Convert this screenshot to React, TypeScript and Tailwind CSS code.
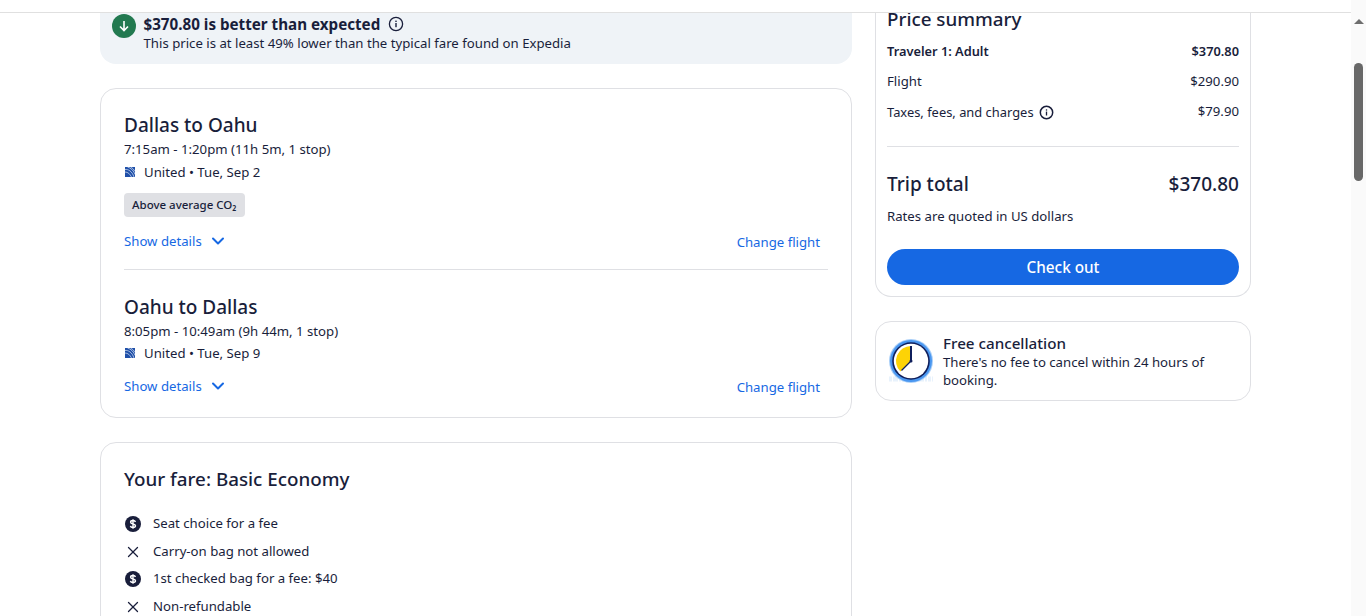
import React from 'react';
import { ChevronDown, X } from 'lucide-react';

const Info = ({ size = 16, weight = 1.3 }: { size?: number; weight?: number }) => (
  <svg width={size} height={size} viewBox="0 0 16 16" fill="none" className="shrink-0">
    <circle cx="8" cy="8" r="6.600" stroke="#191e3b" strokeWidth={weight} />
    <rect x="7.300" y="7" width="1.400" height="4.200" fill="#191e3b" />
    <rect x="7.300" y="4.600" width="1.400" height="1.400" fill="#191e3b" />
  </svg>
);

const Dollar = () => (
  <svg width="16" height="16" viewBox="0 0 16 16" className="shrink-0">
    <circle cx="8" cy="8" r="8" fill="#191e3b" />
    <path d="M10.400 6c-.2-1-1.100-1.500-2.400-1.500-1.300 0-2.400.6-2.400 1.700 0 2.300 4.900 1.200 4.900 3.600 0 1.100-1.100 1.700-2.500 1.700-1.400 0-2.400-.6-2.600-1.700M8 3.300v9.400" stroke="#fff" strokeWidth="1.400" fill="none" />
  </svg>
);

const UnitedLogo = () => (
  <svg width="12" height="12" viewBox="0 0 12 12" className="shrink-0">
    <rect x="1" y="1" width="10" height="10" fill="#1f4fa8" />
    <path d="M1 3.500C4 3 8 5 10 11M1 6c3 0 5 2 6.500 5M3.500 1C7 2 10 5 11 8.500M6.500 1C8.500 2 10 3.500 11 5.500" stroke="#dbe6f7" strokeWidth="0.7" fill="none" />
  </svg>
);

const ClockIcon = () => (
  <svg width="46" height="46" viewBox="0 0 46 46" className="shrink-0">
    <path d="M1 41h44" stroke="#e6f1fc" strokeWidth="5" strokeDasharray="3 1 5 1 2 1" opacity="0.9" />
    <circle cx="23" cy="23" r="22" fill="#a9cff8" />
    <circle cx="23" cy="23" r="21" fill="#4a97f0" />
    <circle cx="23" cy="23" r="18.800" fill="#0f1f5c" />
    <circle cx="23" cy="23" r="17.200" fill="#fff" />
    <path d="M23 23 L23 8 A15 15 0 0 0 12.400 33.600 Z" fill="#fdd306" />
    <path d="M23 23L13.500 32.500" stroke="#0f1f5c" strokeWidth="1.300" fill="none" />
    <path d="M23 8v15" stroke="#0f1f5c" strokeWidth="2" fill="none" />
    <circle cx="23" cy="23" r="1.500" fill="#0f1f5c" />
  </svg>
);

const Leg = ({ title, times, date, badge }: { title: string; times: string; date: string; badge?: boolean }) => (
  <div>
    <h2 className="text-[19px] leading-[26px] font-medium">{title}</h2>
    <p className="mt-[1px] text-[13.2px] leading-[20px]">{times}</p>
    <div className={`flex items-center gap-[8px] text-[13.2px] leading-[20px] ${badge ? 'mt-[3px]' : 'mt-[2px]'}`}>
      <UnitedLogo />
      <span>United • {date}</span>
    </div>
    {badge && (
      <div className="mt-[11px] flex h-[24px] w-fit items-center rounded-[4px] bg-[#dfe0e4] px-[8px] text-[11.5px] font-medium">
        Above average CO₂
      </div>
    )}
    <div className={`flex items-center justify-between pr-[8px] text-[13.2px] leading-[20px] text-[#1668e3] ${badge ? 'mt-[13px]' : 'mt-[12px]'}`}>
      <span className="flex items-center gap-[6px]">
        Show details <ChevronDown size={20} strokeWidth={2.400} />
      </span>
      <span className="mt-[2px]">Change flight</span>
    </div>
  </div>
);

const fareRows = [
  { icon: 'fee', text: 'Seat choice for a fee' },
  { icon: 'x', text: 'Carry-on bag not allowed' },
  { icon: 'fee', text: '1st checked bag for a fee: $40' },
  { icon: 'x', text: 'Non-refundable' },
];

export default function App() {
  return (
    <div className="flex h-[616px] w-[1366px] overflow-hidden bg-white font-['Noto_Sans',sans-serif] text-[#191e3b]">
      <div className="flex h-full w-[1351px] flex-col">
        <div className="relative z-10 h-[13px] shrink-0 border-b border-[#e0e0e0] bg-white" />
        <div className="flex min-h-0 flex-1 gap-[23px] overflow-hidden pl-[100px]">
          <div className="flex w-[752px] shrink-0 flex-col gap-[24px]">
            <div className="mt-[-13px] flex h-[64px] shrink-0 gap-[7.500px] rounded-b-[16px] bg-[#eff3f7] px-[12px] pt-[14px]">
              <div className="flex h-[24px] w-[24px] shrink-0 items-center justify-center rounded-full bg-[#227950]">
                <svg width="14" height="14" viewBox="0 0 14 14" fill="none" stroke="#fff" strokeWidth="1.600">
                  <path d="M7 2v9.500M3 7.500l4 4 4-4" />
                </svg>
              </div>
              <div>
                <div className="flex h-[20px] items-center gap-[8px] text-[15.2px] font-bold">
                  <span className="leading-[20px]">$370.80 is better than expected</span>
                  <Info />
                </div>
                <p className="text-[13.2px] leading-[18px]">This price is at least 49% lower than the typical fare found on Expedia</p>
              </div>
            </div>

            <div className="h-[330px] shrink-0 rounded-[16px] border border-[#dfe0e4] px-[23px] pt-[23px]">
              <Leg title="Dallas to Oahu" times="7:15am - 1:20pm (11h 5m, 1 stop)" date="Tue, Sep 2" badge />
              <div className="mt-[17px] mb-[24px] h-px bg-[#dfe0e4]" />
              <Leg title="Oahu to Dallas" times="8:05pm - 10:49am (9h 44m, 1 stop)" date="Tue, Sep 9" />
            </div>

            <div className="h-[300px] shrink-0 rounded-[16px] border border-[#dfe0e4] px-[23px] pt-[23px]">
              <h2 className="text-[18.800px] leading-[26px] font-medium">Your fare: Basic Economy</h2>
              <ul className="mt-[21px] flex flex-col gap-[7.500px] text-[13.2px] leading-[20px]">
                {fareRows.map((row, i) => (
                  <li key={i} className="flex items-center gap-[12px] pl-[1px]">
                    <span className="mt-[2px] flex w-[16px] justify-center">
                      {row.icon === 'fee' ? <Dollar /> : <X size={18} strokeWidth={1.700} className="shrink-0" />}
                    </span>
                    {row.text}
                  </li>
                ))}
              </ul>
            </div>
          </div>

          <div className="flex w-[376px] shrink-0 flex-col gap-[24px]">
            <div className="mt-[-13px] h-[297px] shrink-0 rounded-b-[16px] border-x border-b border-[#dfe0e4] px-[11px] pt-[6px]">
              <h2 className="text-[18.800px] leading-[26px] font-medium">Price summary</h2>
              <div className="mt-[9px] flex justify-between text-[12.800px] leading-[20px] font-semibold">
                <span>Traveler 1: Adult</span><span>$370.80</span>
              </div>
              <div className="mt-[10px] flex justify-between text-[13.2px] leading-[20px]">
                <span>Flight</span><span>$290.90</span>
              </div>
              <div className="mt-[11px] flex justify-between text-[13.2px] leading-[20px]">
                <span className="flex items-center gap-[5px] text-[12.900px]">Taxes, fees, and charges <Info size={15} weight={1.600} /></span>
                <span className="mt-[-1px]">$79.90</span>
              </div>
              <div className="mt-[24px] h-px bg-[#dfe0e4]" />
              <div className="mt-[24px] flex justify-between text-[19px] leading-[26px] font-medium">
                <span>Trip total</span><span>$370.80</span>
              </div>
              <p className="mt-[9px] text-[13.2px] leading-[20px]">Rates are quoted in US dollars</p>
              <div className="mt-[23px] flex h-[36px] items-center justify-center rounded-full bg-[#1668e3] text-[15.300px] font-medium text-white">
                Check out
              </div>
            </div>
            <div className="flex h-[80px] shrink-0 items-center gap-[9px] rounded-[16px] border border-[#dfe0e4] pl-[12px] pr-[16px]">
              <ClockIcon />
              <div>
                <div className="text-[15.2px] leading-[20px] font-medium">Free cancellation</div>
                <p className="text-[13.2px] leading-[18px]">There's no fee to cancel within 24 hours of booking.</p>
              </div>
            </div>
          </div>
        </div>
      </div>
      <div className="h-full w-[15px] shrink-0 bg-[#fafafa]">
        <div className="mx-auto mt-[19px] h-0 w-0 border-x-[5px] border-b-[5px] border-x-transparent border-b-[#6e6e6e]" />
        <div className="mx-auto mt-[39px] h-[118px] w-[9px] rounded-full bg-[#686868]" />
      </div>
    </div>
  );
}
